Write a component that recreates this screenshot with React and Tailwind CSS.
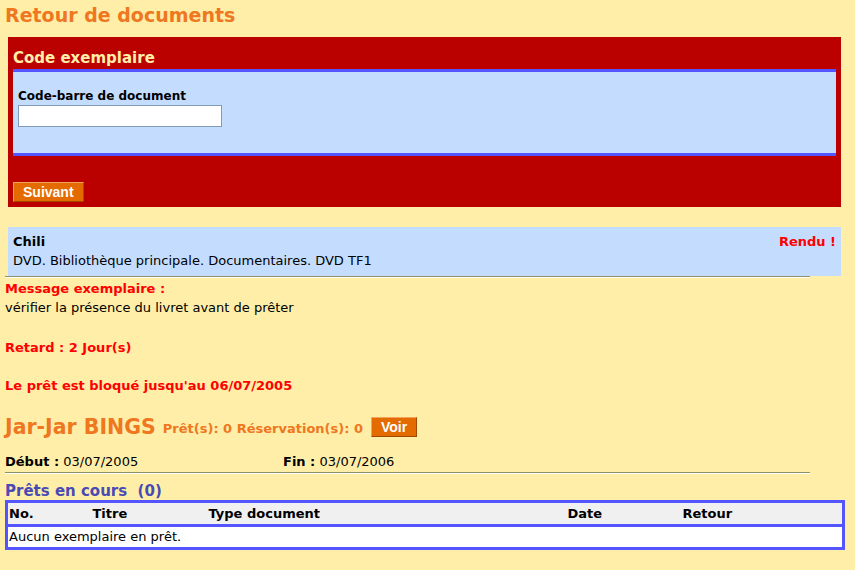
import React, { useState } from 'react'

const verdana = { fontFamily: '"DejaVu Sans", Verdana, sans-serif' }

const Bouton = ({ children }) => (
  <button
    className="bg-[#e36b00] text-white font-bold text-[14px] leading-none px-[9px] h-[20px] border border-t-[#f4a35a] border-l-[#f4a35a] border-b-[#a04a00] border-r-[#a04a00]"
    style={{ fontFamily: '"Liberation Sans", Arial, sans-serif' }}
  >
    {children}
  </button>
)

const Separateur = () => (
  <div className="w-[805px] border-t border-t-[#8f8f6a] border-b border-b-white" />
)

export default function App() {
  const [code, setCode] = useState('')

  return (
    <div className="min-h-[570px] w-[855px] bg-[#ffeea8] text-black text-[13px]" style={verdana}>
      {/* Titre */}
      <h1 className="px-[5px] pt-[4px] h-[37px] text-[19px] font-bold text-[#ee7720] leading-[22px]">
        Retour de documents
      </h1>

      {/* Formulaire */}
      <div className="mx-[8px] w-[833px] h-[170px] bg-[#bb0000] px-[5px] pt-[12px]">
        <h2 className="text-[15px] font-bold text-[#ffeea8] leading-[18px] h-[20px]">Code exemplaire</h2>
        <div className="h-[87px] bg-[#c4ddff] border-y-[3px] border-[#5555ff] px-[5px] pt-[17px]">
          <label className="block font-bold text-[12px] leading-[14px] mb-[2px]">Code-barre de document</label>
          <input
            value={code}
            onChange={(e) => setCode(e.target.value)}
            className="block w-[204px] h-[22px] bg-white border border-[#7f9db9] outline-none px-1"
          />
        </div>
        <div className="pt-[26px]">
          <Bouton>Suivant</Bouton>
        </div>
      </div>

      {/* Exemplaire */}
      <div className="mt-[20px] mx-[8px] w-[833px] h-[49px] bg-[#c4ddff] px-[5px] pt-[8px] flex justify-between">
        <div>
          <div className="font-bold leading-[14px]">Chili</div>
          <div className="leading-[16px] mt-[4px]">DVD. Bibliothèque principale. Documentaires. DVD TF1</div>
        </div>
        <div className="font-bold text-[#ff0000] leading-[14px]">Rendu !</div>
      </div>
      <div className="px-[5px]">
        <Separateur />
        <div className="mt-[3px] font-bold text-[#ff0000] leading-[16px]">Message exemplaire :</div>
        <div className="mt-[3px] leading-[16px]">vérifier la présence du livret avant de prêter</div>
        <div className="mt-[24px] font-bold text-[#ff0000] leading-[16px]">Retard : 2 Jour(s)</div>
        <div className="mt-[22px] font-bold text-[#ff0000] leading-[16px]">Le prêt est bloqué jusqu'au 06/07/2005</div>

        {/* Lecteur */}
        <div className="mt-[21px] flex items-center h-[25px]">
          <span className="text-[20.5px] font-bold text-[#ee7720] leading-none">Jar-Jar BINGS</span>
          <span className="ml-[7px] text-[13px] font-bold text-[#ee7720] mt-[3px]">Prêt(s): 0 Réservation(s): 0</span>
          <span className="ml-[8px]"><Bouton>Voir</Bouton></span>
        </div>
        <div className="mt-[14px] flex leading-[16px]">
          <div className="w-[278px]"><b>Début :</b> 03/07/2005</div>
          <div><b>Fin :</b> 03/07/2006</div>
        </div>
        <div className="mt-[2px]"><Separateur /></div>
        <div className="mt-[8px] text-[15px] font-bold text-[#4a4ab4] leading-[18px]">Prêts en cours&nbsp; (0)</div>

        {/* Tableau */}
        <table className="w-[840px] border-[3px] border-[#5555ff] border-collapse text-[13px]">
          <thead>
            <tr className="bg-[#f0f0f0] h-[24px] border-b-[3px] border-[#5555ff]">
              <th className="text-left font-bold pl-[1px] w-[86px]">No.</th>
              <th className="text-left font-bold w-[116px]">Titre</th>
              <th className="text-left font-bold w-[359px]">Type document</th>
              <th className="text-left font-bold w-[115px]">Date</th>
              <th className="text-left font-bold">Retour</th>
            </tr>
          </thead>
          <tbody>
            <tr className="bg-white h-[23px]">
              <td colSpan={5} className="pl-[1px]">Aucun exemplaire en prêt.</td>
            </tr>
          </tbody>
        </table>
      </div>
    </div>
  )
}
